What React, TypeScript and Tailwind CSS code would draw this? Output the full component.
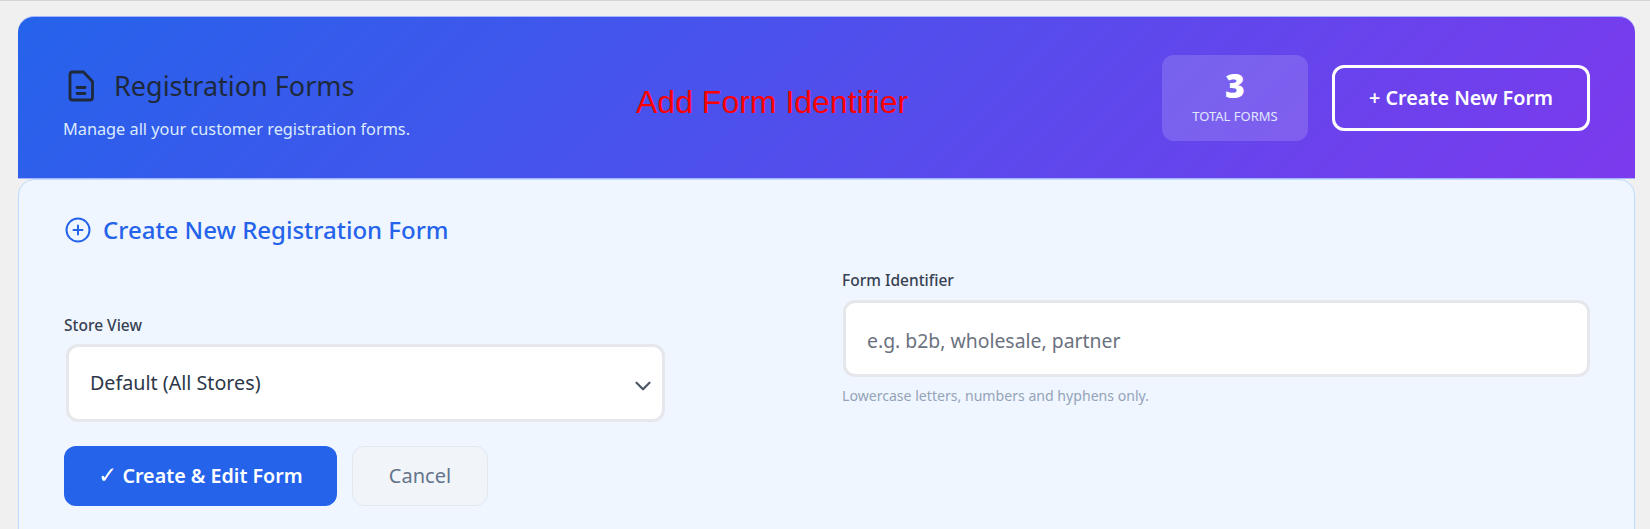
import { ChevronDown } from "lucide-react";

function FileIcon() {
  return (
    <svg width="26" height="32" viewBox="0 0 26 32" fill="none" stroke="#1e293b" strokeWidth="2.8" strokeLinecap="round" strokeLinejoin="round" className="shrink-0">
      <path d="M4.500 2h11l9 9.500v16a2.500 2.500 0 0 1-2.500 2.500h-17.500a2.500 2.500 0 0 1-2.500-2.500v-23a2.500 2.500 0 0 1 2.500-2.500z" />
      <path d="M9 17.500h8M9 23.500h8" />
    </svg>
  );
}

export default function App() {
  return (
    <div className="min-h-[529px] h-[529px] overflow-hidden bg-[#f0f0f0] border-t border-t-[#d4d4d4] pt-[15px] pl-[18px] pr-[15px] font-['Noto_Sans',sans-serif]">
      <header className="h-[163px] rounded-t-2xl border-y border-[#a5b4fc] bg-[linear-gradient(135deg,#2563eb,#7c3aed)] flex items-center pl-[45px] pr-[45px]">
        <div className="w-[573px] shrink-0 mt-[12px]">
          <div className="flex items-center gap-[20px] pl-[5px] translate-y-px">
            <FileIcon />
            <h1 className="text-[27px] leading-[36px] font-normal text-[#1e293b]">Registration Forms</h1>
          </div>
          <p className="mt-[15px] text-[16.300px] leading-[22px] text-[#dbeafe]">Manage all your customer registration forms.</p>
        </div>
        <div className="text-[32px] leading-none text-[#ff0000] font-['Liberation_Sans',sans-serif] mt-[8px]">Add Form Identifier</div>
        <div className="ml-auto flex items-center gap-6">
          <div className="w-[146px] h-[86px] rounded-xl bg-white/15 flex flex-col items-center justify-center text-white">
            <div className="text-[34px] leading-[30px] font-black -translate-y-px">3</div>
            <div className="mt-[6px] text-[13px] leading-[18px] text-[#e0e7ff]">TOTAL FORMS</div>
          </div>
          <button className="w-[258px] h-[66px] rounded-xl border-[3px] border-white text-white text-[19.800px] font-semibold">+ Create New Form</button>
        </div>
      </header>
      <section className="h-[360px] rounded-t-2xl border border-[#bfdbfe] bg-[#eff6ff] pl-[45px] pr-[44px] pt-[34px]">
        <div className="flex items-center gap-[12px] pl-[1px]">
          <svg width="26" height="26" viewBox="0 0 26 26" fill="none" stroke="#2563eb" strokeWidth="2" strokeLinecap="round" className="shrink-0">
            <circle cx="13" cy="13" r="11.500" />
            <path d="M13 8.500v9M8.500 13h9" />
          </svg>
          <h2 className="text-[24px] leading-[32px] font-medium text-[#2563eb]">Create New Registration Form</h2>
        </div>
        <div className="flex mt-[24px]">
          <div className="w-[603px] shrink-0 pt-[45px]">
            <label className="block text-[15.500px] leading-[20px] font-medium text-[#374151]">Store View</label>
            <div className="relative mx-[2px] mt-[9px]">
              <select className="block w-full h-[78px] appearance-none rounded-xl border-[3px] border-[#e5e7eb] bg-white pl-[21px] text-[19.700px] text-[#2d3748] outline-none">
                <option>Default (All Stores)</option>
              </select>
              <ChevronDown className="absolute right-[9px] top-[29px] pointer-events-none text-[#4b5563]" size={26} strokeWidth={2} />
            </div>
            <div className="flex gap-[15px] mt-[24px]">
              <button className="w-[273px] h-[60px] rounded-xl bg-[#2563eb] text-white text-[19.700px] font-semibold">
                <span className="text-[23px] leading-none font-normal">✓</span> Create &amp; Edit Form
              </button>
              <button className="w-[136px] h-[60px] rounded-xl border border-[#e2e8f0] bg-[#f1f5f9] text-[#64748b] text-[20px]">Cancel</button>
            </div>
          </div>
          <div className="ml-[175px] flex-1">
            <label className="block text-[15.500px] leading-[20px] font-medium text-[#374151]">Form Identifier</label>
            <input
              placeholder="e.g. b2b, wholesale, partner"
              className="block w-[747px] h-[77px] ml-[1px] mt-[10px] rounded-xl border-[3px] border-[#e5e7eb] bg-white px-[21px] pt-[3px] text-[19.400px] outline-none placeholder:text-[#6b7280]"
            />
            <p className="mt-[10px] text-[14.100px] leading-[18px] text-[#94a3b8]">Lowercase letters, numbers and hyphens only.</p>
          </div>
        </div>
      </section>
    </div>
  );
}
